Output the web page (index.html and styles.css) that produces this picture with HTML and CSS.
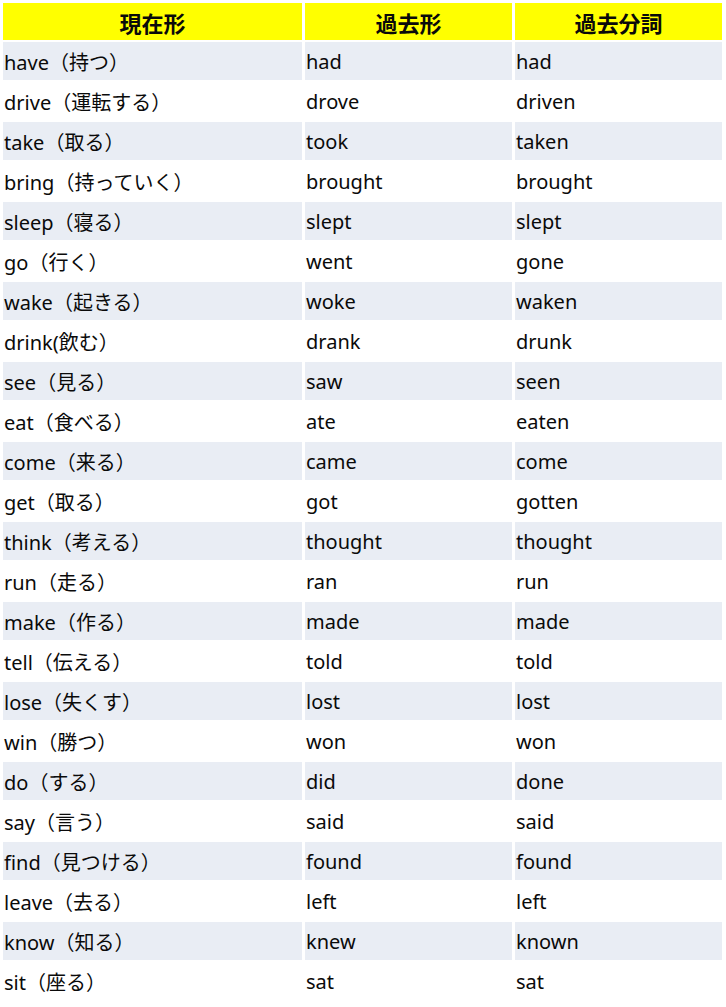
FILE: index.html
```html
<!DOCTYPE html>
<html lang="ja">
<head>
<meta charset="utf-8">
<link rel="stylesheet" href="styles.css">
</head>
<body>
<div class="table">
  <div class="cell head">現在形</div><div class="cell head">過去形</div><div class="cell head">過去分詞</div>
  <div class="cell odd">have（持つ）</div><div class="cell odd">had</div><div class="cell odd">had</div>
  <div class="cell">drive（運転する）</div><div class="cell">drove</div><div class="cell">driven</div>
  <div class="cell odd">take（取る）</div><div class="cell odd">took</div><div class="cell odd">taken</div>
  <div class="cell">bring（持っていく）</div><div class="cell">brought</div><div class="cell">brought</div>
  <div class="cell odd">sleep（寝る）</div><div class="cell odd">slept</div><div class="cell odd">slept</div>
  <div class="cell">go（行く）</div><div class="cell">went</div><div class="cell">gone</div>
  <div class="cell odd">wake（起きる）</div><div class="cell odd">woke</div><div class="cell odd">waken</div>
  <div class="cell">drink(飲む）</div><div class="cell">drank</div><div class="cell">drunk</div>
  <div class="cell odd">see（見る）</div><div class="cell odd">saw</div><div class="cell odd">seen</div>
  <div class="cell">eat（食べる）</div><div class="cell">ate</div><div class="cell">eaten</div>
  <div class="cell odd">come（来る）</div><div class="cell odd">came</div><div class="cell odd">come</div>
  <div class="cell">get（取る）</div><div class="cell">got</div><div class="cell">gotten</div>
  <div class="cell odd">think（考える）</div><div class="cell odd">thought</div><div class="cell odd">thought</div>
  <div class="cell">run（走る）</div><div class="cell">ran</div><div class="cell">run</div>
  <div class="cell odd">make（作る）</div><div class="cell odd">made</div><div class="cell odd">made</div>
  <div class="cell">tell（伝える）</div><div class="cell">told</div><div class="cell">told</div>
  <div class="cell odd">lose（失くす）</div><div class="cell odd">lost</div><div class="cell odd">lost</div>
  <div class="cell">win（勝つ）</div><div class="cell">won</div><div class="cell">won</div>
  <div class="cell odd">do（する）</div><div class="cell odd">did</div><div class="cell odd">done</div>
  <div class="cell">say（言う）</div><div class="cell">said</div><div class="cell">said</div>
  <div class="cell odd">find（見つける）</div><div class="cell odd">found</div><div class="cell odd">found</div>
  <div class="cell">leave（去る）</div><div class="cell">left</div><div class="cell">left</div>
  <div class="cell odd">know（知る）</div><div class="cell odd">knew</div><div class="cell odd">known</div>
  <div class="cell">sit（座る）</div><div class="cell">sat</div><div class="cell">sat</div>
</div>
</body>
</html>
```
FILE: styles.css
```css
html, body {
  margin: 0;
  padding: 0;
  background: #ffffff;
}
body {
  padding: 3px 4px 0 3px;
  font-family: "Noto Sans", "Noto Sans CJK JP", sans-serif;
  color: #0a0a0a;
}
.table {
  display: grid;
  grid-template-columns: 299px 207px 207px;
  grid-template-rows: 37px;
  grid-auto-rows: 38px;
  column-gap: 3px;
  row-gap: 2px;
}
.cell {
  display: flex;
  align-items: center;
  padding-left: 1px;
  font-size: 20px;
  white-space: nowrap;
  background: #ffffff;
}
.cell.odd {
  background: #e9edf4;
}
.cell.head {
  background: #ffff00;
  justify-content: center;
  font-weight: bold;
  font-size: 22px;
  padding-left: 0;
}
```
